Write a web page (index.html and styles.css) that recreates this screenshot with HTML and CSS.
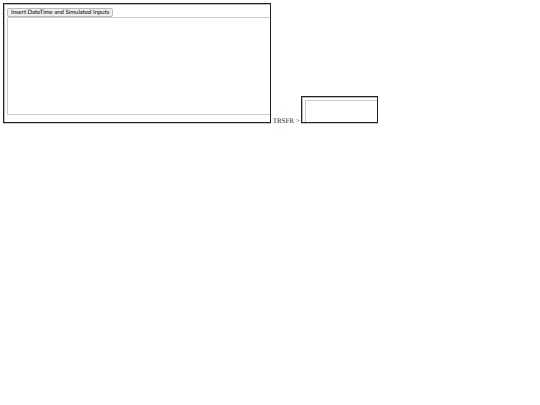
FILE: index.html
```html
<!DOCTYPE html>
<html lang="en">
<head>
<meta charset="utf-8">
<title>Data transfer</title>
<link rel="stylesheet" href="styles.css">
</head>
<body>
<main class="transfer">
  <section class="frame frame-source">
    <button class="insert" type="button">Insert DateTime and Simulated Inputs</button>
    <textarea class="field" aria-label="Source data"></textarea>
  </section>
  <span class="label">TRSFR &gt;</span>
  <section class="frame frame-result">
    <textarea class="field" aria-label="Transferred data"></textarea>
  </section>
</main>
</body>
</html>
```

FILE: styles.css
```css
* {
  box-sizing: border-box;
}

body {
  margin: 3px;
  background: #fff;
  color: #000;
  font-family: "Liberation Serif", serif;
  font-size: 7px;
  text-rendering: geometricPrecision;
}

.transfer {
  line-height: 7px;
  white-space: nowrap;
}

.frame {
  display: inline-block;
  overflow: hidden;
  border: 1px solid #222;
  box-shadow: inset 1px 1px #bbb, 0 1px #ccc;
}

.frame-source {
  width: calc(50% + 1px);
  height: 120px;
  padding: 4px 0 0 3px;
}

.frame-result {
  width: 77px;
  height: 27px;
  padding: 3px 0 0 3px;
}

.insert {
  display: block;
  height: 9px;
  padding: 0 3px;
  border: 1px solid #bbb;
  border-radius: 2px;
  background: #efefef;
  color: #000;
  font: 6px/7px Lato, sans-serif;
  text-rendering: inherit;
}

.field {
  display: block;
  width: 120%;
  height: 98px;
  margin: 0;
  border: 1px solid #ccc;
  background: #fff;
  resize: none;
}

.label {
  color: #222;
}
```
